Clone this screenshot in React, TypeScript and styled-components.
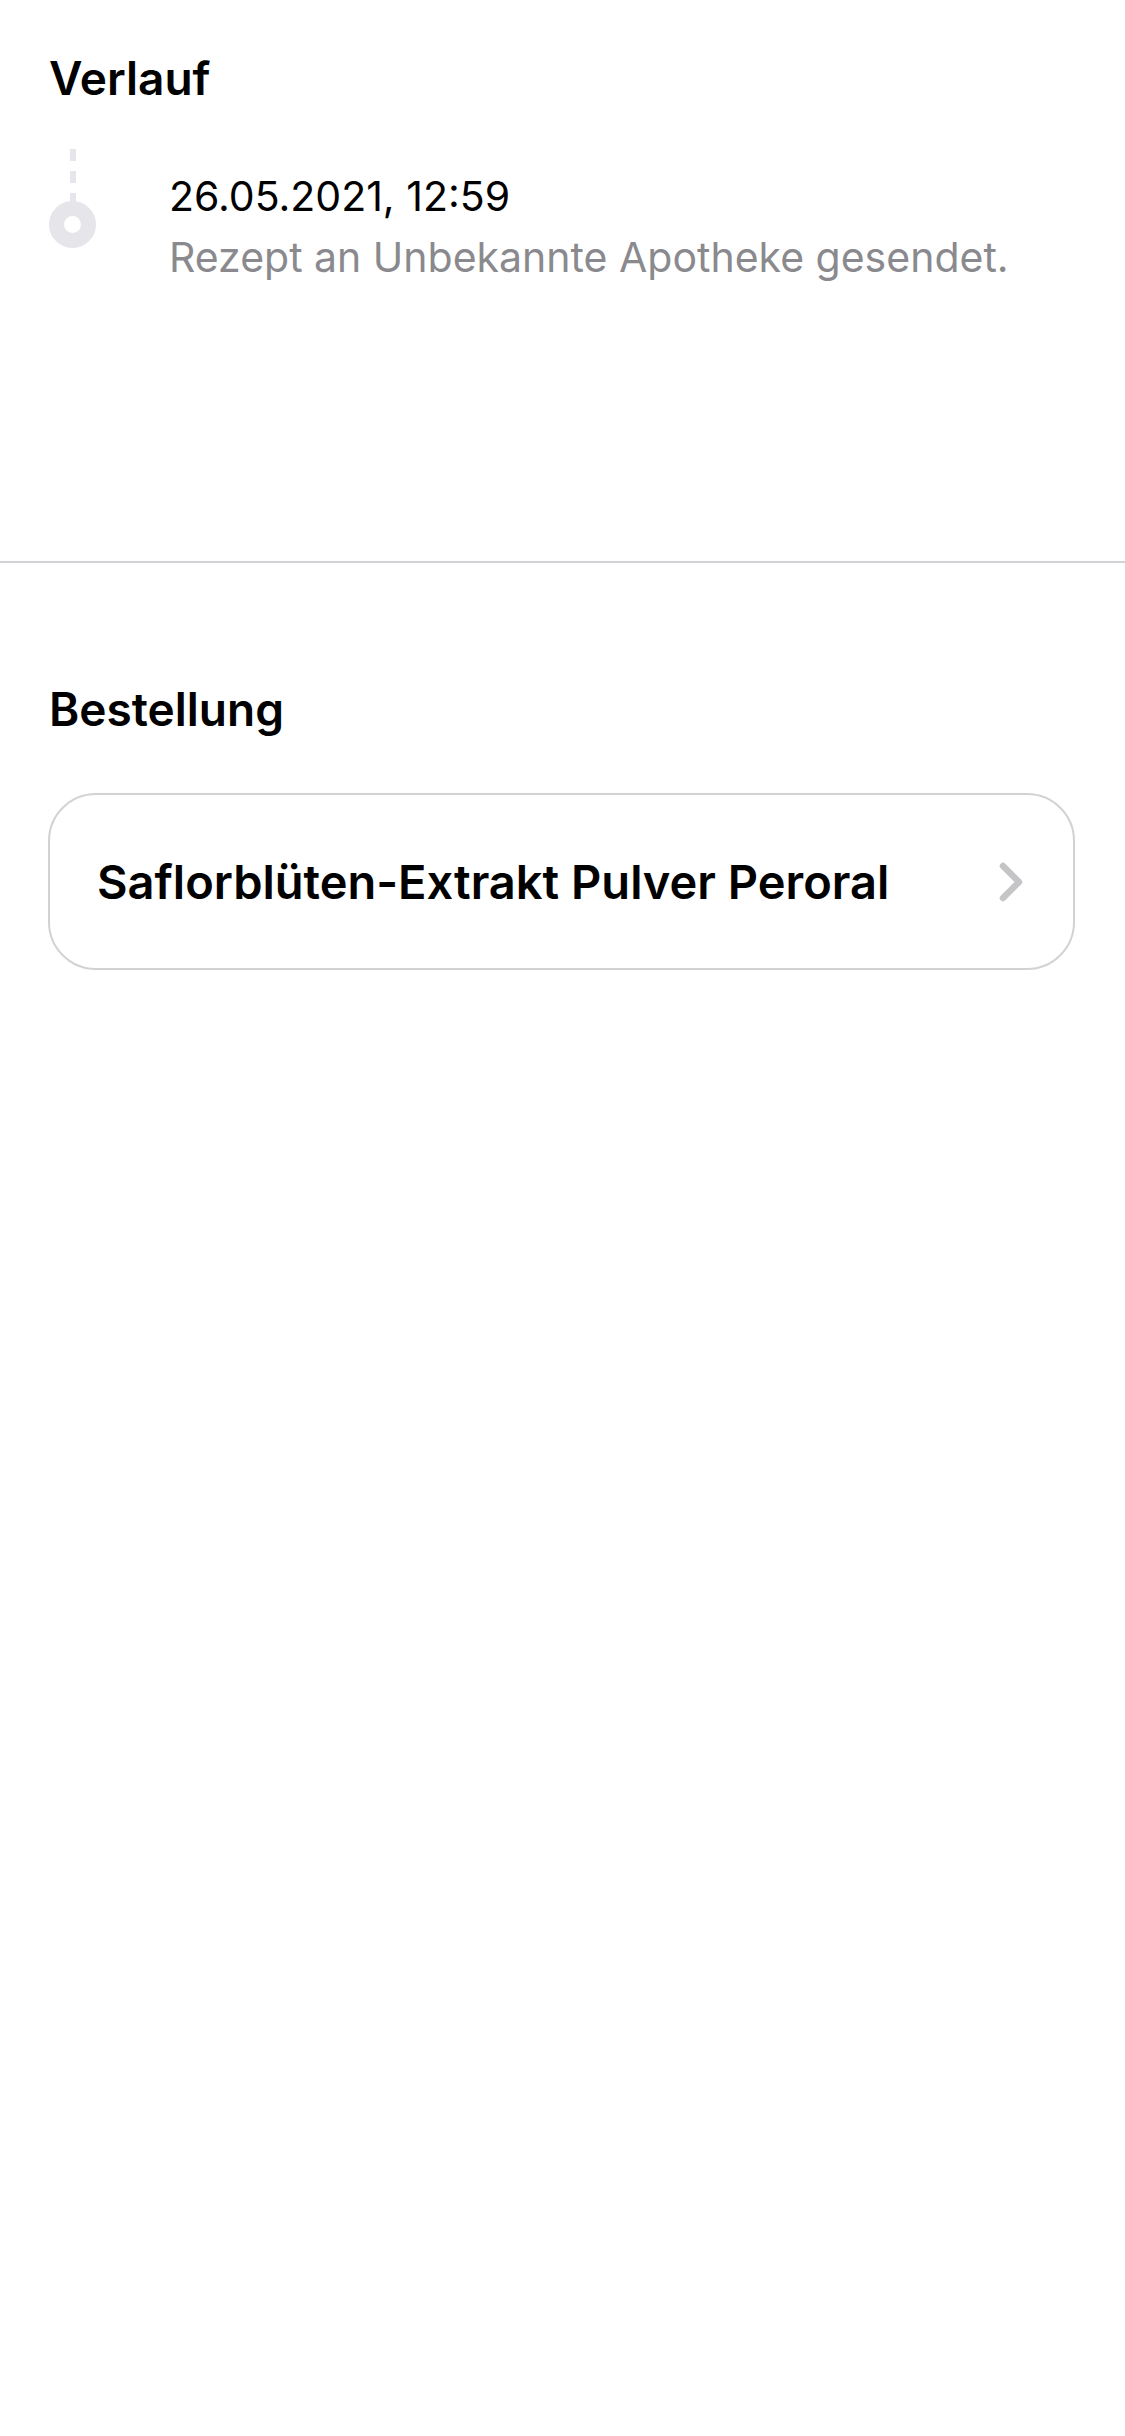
import React from "react";
import styled, { createGlobalStyle } from "styled-components";

const GlobalStyle = createGlobalStyle`
  html, body {
    margin: 0;
    padding: 0;
    background: #ffffff;
  }
  body {
    font-family: Inter, "Noto Sans", "Liberation Sans", sans-serif;
    color: #000000;
    -webkit-font-smoothing: antialiased;
  }
`;

const Page = styled.main`
  width: 1125px;
  min-height: 2436px;
  background: #ffffff;
  display: flex;
  flex-direction: column;
`;

const Section = styled.section<{ $top: number; $bottom: number }>`
  display: flex;
  flex-direction: column;
  padding: ${(p) => p.$top}px 50px ${(p) => p.$bottom}px 49px;
`;

const SectionTitle = styled.h2`
  margin: 0;
  font-size: 46px;
  line-height: 56px;
  font-weight: 600;
  letter-spacing: 0px;
`;

const Timeline = styled.ol`
  list-style: none;
  margin: 43px 0 0 0;
  padding: 0;
`;

const TimelineItem = styled.li`
  display: flex;
  flex-direction: row;
  gap: 73px;
`;

const Rail = styled.div`
  width: 47px;
  display: flex;
  flex-direction: column;
  align-items: center;
  flex-shrink: 0;
`;

const DashedLine = styled.div`
  width: 6px;
  height: 53px;
  background: repeating-linear-gradient(
    to bottom,
    #e5e5ea 0px,
    #e5e5ea 12px,
    transparent 12px,
    transparent 22px
  );
`;

const Dot = styled.div`
  box-sizing: border-box;
  width: 47px;
  height: 47px;
  margin-top: -1px;
  border-radius: 50%;
  border: 15px solid #e5e5ea;
  background: #ffffff;
`;

const EntryText = styled.div`
  padding-top: 17px;
  display: flex;
  flex-direction: column;
`;

const EntryDate = styled.span`
  font-size: 41px;
  line-height: 60px;
  font-weight: 400;
  color: #000000;
`;

const EntryDescription = styled.span`
  font-size: 41px;
  line-height: 62px;
  font-weight: 400;
  color: #8a8a8e;
`;

const Divider = styled.hr`
  margin: 0;
  border: none;
  height: 2px;
  background: #d1d1d6;
`;

const OrderCard = styled.button`
  box-sizing: border-box;
  margin-top: 56px;
  width: 1027px;
  margin-left: -1px;
  height: 177px;
  border: 2px solid #d2d2d5;
  border-radius: 48px;
  background: #ffffff;
  display: flex;
  flex-direction: row;
  align-items: center;
  justify-content: space-between;
  padding: 0 50px 0 47px;
  font-family: inherit;
  cursor: pointer;
  text-align: left;
`;

const OrderName = styled.span`
  font-size: 47px;
  font-weight: 600;
  color: #000000;
  letter-spacing: 0px;
  margin-top: -1px;
`;

const Chevron = () => (
  <svg width="24" height="40" viewBox="0 0 24 40" aria-hidden="true">
    <polyline
      points="4,4 20,20 4,36"
      fill="none"
      stroke="#c5c5c8"
      strokeWidth="6.5"
      strokeLinecap="round"
      strokeLinejoin="round"
    />
  </svg>
);

export default function App() {
  return (
    <>
      <GlobalStyle />
      <Page>
        <Section $top={50} $bottom={273}>
          <SectionTitle>Verlauf</SectionTitle>
          <Timeline>
            <TimelineItem>
              <Rail>
                <DashedLine />
                <Dot />
              </Rail>
              <EntryText>
                <EntryDate>26.05.2021, 12:59</EntryDate>
                <EntryDescription>
                  Rezept an Unbekannte Apotheke gesendet.
                </EntryDescription>
              </EntryText>
            </TimelineItem>
          </Timeline>
        </Section>
        <Divider />
        <Section $top={118} $bottom={0}>
          <SectionTitle>Bestellung</SectionTitle>
          <OrderCard>
            <OrderName>Saflorblüten-Extrakt Pulver Peroral</OrderName>
            <Chevron />
          </OrderCard>
        </Section>
      </Page>
    </>
  );
}
